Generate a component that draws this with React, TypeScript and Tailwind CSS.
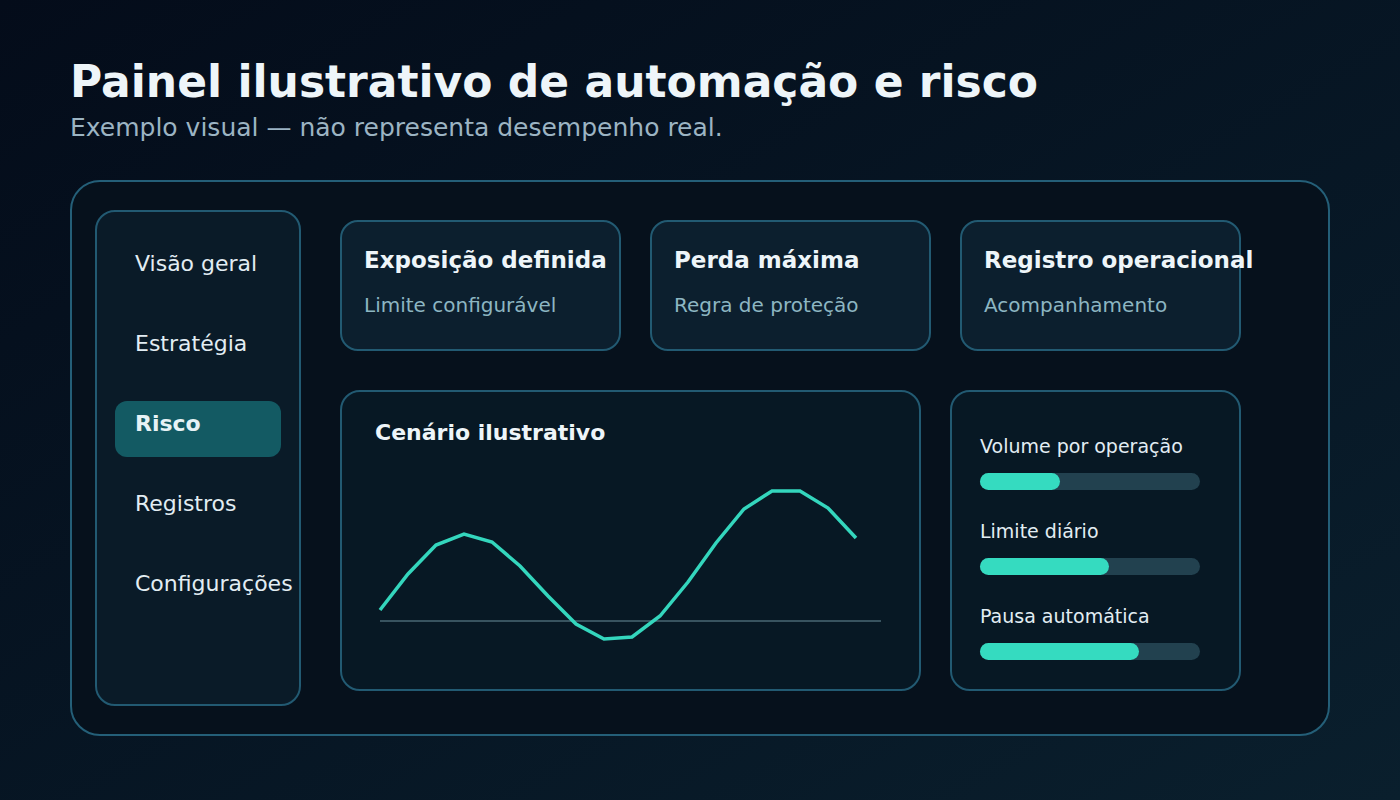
const nav = ["Visão geral", "Estratégia", "Risco", "Registros", "Configurações"];

const stats = [
  { title: "Exposição definida", sub: "Limite configurável" },
  { title: "Perda máxima", sub: "Regra de proteção" },
  { title: "Registro operacional", sub: "Acompanhamento" },
];

const limits = [
  { label: "Volume por operação", fill: 80 },
  { label: "Limite diário", fill: 129 },
  { label: "Pausa automática", fill: 159 },
];

// y values of the sample curve, one every 28px starting at x=38
const curve = [164, 128, 99, 88, 96, 120, 150, 178, 193, 191, 170, 136, 97, 63, 45, 45, 62, 92];

function Chart() {
  const pts = curve.map((y, i) => `${38 + i * 28},${y}`).join(" ");
  return (
    <svg width="576" height="236" viewBox="0 0 576 236" className="block">
      <line x1="38" y1="175" x2="539" y2="175" stroke="#38535f" strokeWidth="2" />
      <polyline
        points={pts}
        fill="none"
        stroke="#34d6bd"
        strokeWidth="3.5"
        strokeLinejoin="miter"
      />
    </svg>
  );
}

export default function App() {
  return (
    <div
      className="h-[800px] w-full overflow-hidden bg-linear-to-br from-[#040c1a] to-[#0a1f2d] pl-[70px] pt-[56px]"
      style={{ fontFamily: '"DejaVu Sans", Verdana, sans-serif' }}
    >
      <h1 className="text-[44px] leading-[52px] font-bold text-[#eef5f9]">
        Painel ilustrativo de automação e risco
      </h1>
      <p className="mt-[6px] text-[25px] leading-[28px] text-[#9cb4c3]">
        Exemplo visual — não representa desempenho real.
      </p>

      <div className="mt-[38px] flex h-[556px] w-[1260px] rounded-[30px] border-2 border-[#245f78] bg-[#06111c] pl-[23px] pt-[28px]">
        <aside className="flex h-[496px] w-[206px] flex-col gap-[24px] rounded-[20px] border-2 border-[#225a72] bg-[#0a1b28] pt-[29px]">
          {nav.map((item) => (
            <div
              key={item}
              className={
                item === "Risco"
                  ? "mx-[18px] h-[56px] rounded-[12px] bg-[#135a63] px-[20px] pt-[10px] text-[22px] leading-[26px] font-bold text-[#e6f2f5]"
                  : "mx-[18px] h-[56px] px-[20px] pt-[10px] text-[22px] leading-[26px] whitespace-nowrap text-[#e2edf3]"
              }
            >
              {item}
            </div>
          ))}
        </aside>

        <div className="ml-[39px] flex flex-col gap-[39px] pt-[10px]">
          <div className="flex gap-[29px]">
            {stats.map((s) => (
              <div
                key={s.title}
                className="h-[131px] w-[281px] rounded-[18px] border-2 border-[#225a72] bg-[#0c1f2e] pl-[22px] pt-[25px]"
              >
                <div className="text-[23px] leading-[26px] font-bold whitespace-nowrap text-[#eef5f9]">
                  {s.title}
                </div>
                <div className="mt-[20px] text-[20px] leading-[24px] text-[#8db6c2]">
                  {s.sub}
                </div>
              </div>
            ))}
          </div>

          <div className="flex gap-[29px]">
            <div className="h-[301px] w-[581px] rounded-[20px] border-2 border-[#225a72] bg-[#071824] pt-[28px]">
              <div className="pl-[33px] text-[22px] leading-[26px] font-bold text-[#eef5f9]">
                Cenário ilustrativo
              </div>
              <Chart />
            </div>

            <div className="h-[301px] w-[291px] rounded-[20px] border-2 border-[#225a72] bg-[#071824] pl-[28px] pt-[43px]">
              {limits.map((l, i) => (
                <div key={l.label} className={i > 0 ? "mt-[30px]" : ""}>
                  <div className="text-[19px] leading-[22px] text-[#e2edf3]">{l.label}</div>
                  <div className="mt-[16px] h-[17px] w-[220px] rounded-full bg-[#22414f]">
                    <div
                      className="h-full rounded-full bg-[#35dbc0]"
                      style={{ width: l.fill }}
                    />
                  </div>
                </div>
              ))}
            </div>
          </div>
        </div>
      </div>
    </div>
  );
}
